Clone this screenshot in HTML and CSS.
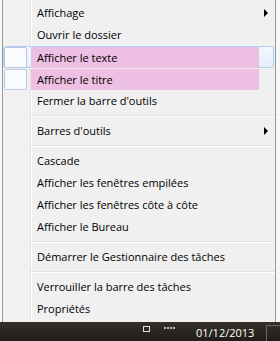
FILE: index.html
```html
<!DOCTYPE html>
<html lang="fr">
  <head>
    <meta charset="UTF-8" />
    <title>Menu barre des tâches</title>
    <link rel="stylesheet" href="styles.css">
  </head>
  <body>
    <div class="screen">
      <div class="desk">
        <div class="menu">
          <div class="item"><span class="label">Affichage</span><span class="arrow"></span></div>
          <div class="item"><span class="label">Ouvrir le dossier</span></div>
          <div class="item checked hover"><span class="check"></span><span class="mark">Afficher le texte</span></div>
          <div class="item checked"><span class="check"></span><span class="mark">Afficher le titre</span></div>
          <div class="item"><span class="label">Fermer la barre d'outils</span></div>
          <div class="sep"></div>
          <div class="item"><span class="label">Barres d'outils</span><span class="arrow"></span></div>
          <div class="sep"></div>
          <div class="item"><span class="label">Cascade</span></div>
          <div class="item"><span class="label">Afficher les fenêtres empilées</span></div>
          <div class="item"><span class="label">Afficher les fenêtres côte à côte</span></div>
          <div class="item"><span class="label">Afficher le Bureau</span></div>
          <div class="sep"></div>
          <div class="item"><span class="label">Démarrer le Gestionnaire des tâches</span></div>
          <div class="sep"></div>
          <div class="item"><span class="label">Verrouiller la barre des tâches</span></div>
          <div class="item"><span class="label">Propriétés</span></div>
        </div>
      </div>
      <div class="taskbar">
        <span class="tray-icon"></span>
        <span class="tray-bars"></span>
        <span class="date">01/12/2013</span>
        <span class="show-desktop"></span>
      </div>
    </div>
  </body>
</html>
```

FILE: styles.css
```css
body {
  margin: 0;
  font-family: 'Open Sans', 'Noto Sans', sans-serif;
  font-size: 11px;
  color: #000;
  background: #f4f4f4;
}

.screen {
  width: 280px;
  height: 341px;
  display: flex;
  flex-direction: column;
  overflow: hidden;
}

.desk {
  display: flex;
  padding-left: 2px;
  background: #f7f7f7;
}

.menu {
  width: 274px;
  box-sizing: border-box;
  padding: 2px 0;
  border-left: 1px solid #979797;
  border-right: 1px solid #979797;
  background: linear-gradient(to right, #f1f1f1 27px, #e2e3e3 27px, #e2e3e3 28px, #fff 28px, #fff 29px, #f0f0f0 29px);
}

.item {
  height: 22px;
  display: flex;
  align-items: center;
  padding: 0 7px 0 34px;
  line-height: 22px;
  white-space: nowrap;
}

.label {
  flex: 1;
}

.arrow {
  width: 0;
  height: 0;
  border-left: 4px solid #000;
  border-top: 4px solid transparent;
  border-bottom: 4px solid transparent;
}

.item.checked {
  padding-left: 1px;
}

.item.hover {
  border-radius: 3px;
  margin-right: 1px;
  background: linear-gradient(#f2f7fd, #e3eefb);
  box-shadow: inset 0 0 0 1px #b2d0f1;
}

.check {
  width: 23px;
  height: 21px;
  box-sizing: border-box;
  border: 1px solid #b6c9e2;
  border-radius: 2px;
  background: #fafcff;
}

.mark {
  width: 228px;
  height: 21px;
  margin-left: 4px;
  padding-left: 6px;
  box-sizing: border-box;
  line-height: 21px;
  background: #edbfe2;
}

.sep {
  height: 8px;
  box-sizing: border-box;
  padding-top: 3px;
  margin-left: 28px;
}

.sep::before {
  content: "";
  display: block;
  border-top: 1px solid #e0e0e0;
  border-bottom: 1px solid #fff;
}

.taskbar {
  flex: 1;
  display: flex;
  align-items: center;
  background: linear-gradient(#36302a, #1f1b17);
  color: #fff;
}

.tray-icon {
  width: 5px;
  height: 4px;
  margin: 0 0 6px 143px;
  border: 1px solid #ddd;
}

.tray-bars {
  width: 12px;
  height: 2px;
  margin: 0 0 8px 14px;
  background: repeating-linear-gradient(to right, #bbb 0 2px, transparent 2px 3px);
}

.date {
  margin-left: 20px;
  font-size: 11px;
}

.show-desktop {
  width: 13px;
  height: 16px;
  margin: 3px 0 0 auto;
  border: 1px solid #6a6560;
  border-right: none;
  border-bottom: none;
}
```
